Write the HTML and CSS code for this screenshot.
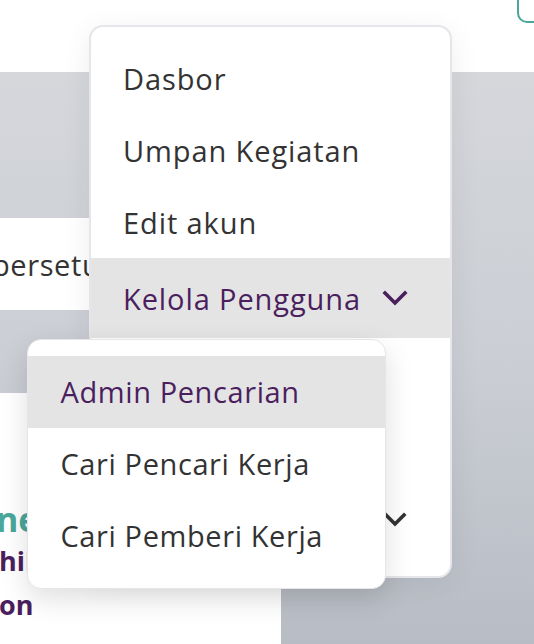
FILE: index.html
```html
<!DOCTYPE html>
<html lang="id">
<head>
<meta charset="utf-8">
<title>Menu</title>
<link rel="stylesheet" href="styles.css">
</head>
<body>
<div class="page">
  <header class="topbar">
    <div class="outline-btn"></div>
  </header>
  <main class="main">
    <div class="strip"><span class="strip-text">persetujuan</span></div>
    <section class="card">
      <div class="card-title">nemukan</div>
      <div class="card-sub">hilir</div>
      <div class="card-sub">on</div>
    </section>
  </main>

  <nav class="menu">
    <a class="menu-item">Dasbor</a>
    <a class="menu-item">Umpan Kegiatan</a>
    <a class="menu-item">Edit akun</a>
    <a class="menu-item menu-item--active menu-item--tall">
      <span>Kelola Pengguna</span>
      <svg class="chev" width="26" height="16" viewBox="0 0 26 16"><polyline points="3,3 13,13 23,3" fill="none" stroke="currentColor" stroke-width="3.6" stroke-linecap="square"/></svg>
    </a>
    <a class="menu-item"></a>
    <a class="menu-item"></a>
    <a class="menu-item menu-item--last">
      <span></span>
      <svg class="chev" width="26" height="16" viewBox="0 0 26 16"><polyline points="4,3 13,12 22,3" fill="none" stroke="currentColor" stroke-width="3.6" stroke-linecap="square"/></svg>
    </a>
  </nav>

  <div class="submenu">
    <a class="sub-item sub-item--active">Admin Pencarian</a>
    <a class="sub-item">Cari Pencari Kerja</a>
    <a class="sub-item">Cari Pemberi Kerja</a>
  </div>
</div>
</body>
</html>
```

FILE: styles.css
```css
* { box-sizing: border-box; }
html, body { margin: 0; padding: 0; }
body {
  width: 534px;
  height: 644px;
  overflow: hidden;
  font-family: "Open Sans", "Noto Sans", sans-serif;
  color: #333;
  background: #fff;
}
.page {
  position: relative;
  width: 534px;
  height: 644px;
  overflow: hidden;
  display: flex;
  flex-direction: column;
}
.topbar {
  height: 72px;
  flex: none;
  background: #fff;
  display: flex;
  justify-content: flex-end;
  align-items: flex-start;
}
.outline-btn {
  width: 60px;
  height: 40px;
  margin-top: -17px;
  margin-right: -43px;
  border: 2px solid #4aa79a;
  border-radius: 10px;
}
.main {
  flex: 1;
  background: linear-gradient(180deg, #d5d7db 0%, #cbced4 50%, #b8bcc5 100%);
  display: flex;
  flex-direction: column;
  padding-top: 146px;
}
.strip {
  width: 320px;
  height: 92px;
  background: #fff;
  display: flex;
  align-items: center;
  overflow: hidden;
}
.strip-text {
  font-size: 29px;
  letter-spacing: 0.6px;
  margin-left: -8px;
  white-space: nowrap;
  color: #333;
}
.card {
  margin-top: 83px;
  width: 281px;
  flex: 1;
  background: #fff;
  padding-top: 106px;
  overflow: hidden;
}
.card-title {
  font-weight: 700;
  font-size: 34px;
  line-height: 40px;
  color: #4aa79a;
  margin-left: -4px;
  white-space: nowrap;
}
.card-sub {
  font-weight: 700;
  font-size: 27px;
  line-height: 44px;
  color: #4b1f5e;
  margin-left: -1px;
  white-space: nowrap;
}
.menu {
  position: absolute;
  left: 89px;
  top: 25px;
  width: 363px;
  height: 553px;
  background: #fff;
  border: 2px solid #e6e6ea;
  border-radius: 14px;
  box-shadow: 0 6px 30px rgba(0, 0, 0, 0.07);
  padding-top: 15px;
  display: flex;
  flex-direction: column;
  overflow: hidden;
}
.menu-item {
  height: 72px;
  flex: none;
  display: flex;
  align-items: center;
  justify-content: space-between;
  padding: 0 42px 0 32px;
  font-size: 29px;
  letter-spacing: 0.9px;
  color: #333;
  white-space: nowrap;
}
.menu-item--tall { height: 80px; }
.menu-item--last { height: 76px; }
.menu-item--active {
  background: #e4e4e5;
  color: #4b1f5e;
}
.chev { flex: none; display: block; }
.submenu {
  position: absolute;
  left: 27px;
  top: 339px;
  width: 359px;
  height: 250px;
  background: #fff;
  border: 1.5px solid #e6e6ea;
  border-radius: 14px;
  box-shadow: 0 10px 28px rgba(0, 0, 0, 0.13);
  padding-top: 15.5px;
  display: flex;
  flex-direction: column;
  overflow: hidden;
}
.sub-item {
  height: 72px;
  flex: none;
  display: flex;
  align-items: center;
  padding-left: 32.5px;
  font-size: 29px;
  letter-spacing: 0.6px;
  color: #333;
  white-space: nowrap;
}
.sub-item--active {
  background: #e4e4e5;
  color: #4b1f5e;
}
```
